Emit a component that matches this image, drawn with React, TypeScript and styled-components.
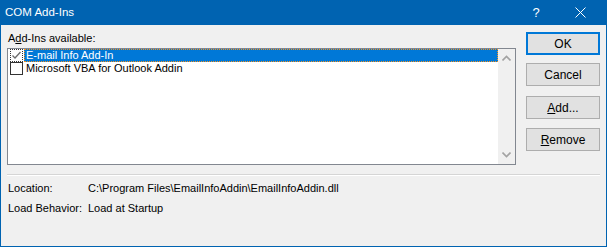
import React from 'react';
import styled, { createGlobalStyle } from 'styled-components';

const GlobalStyle = createGlobalStyle`
  html, body {
    margin: 0;
    padding: 0;
    background: #ffffff;
  }
  body {
    font-family: "Liberation Sans", Arial, sans-serif;
    font-size: 11px;
    color: #000000;
  }
`;

const Window = styled.div`
  width: 607px;
  height: 247px;
  box-sizing: border-box;
  background: #0063b1;
  padding: 0 1px 1px 1px;
  display: flex;
  flex-direction: column;
`;

const TitleBar = styled.div`
  height: 25px;
  display: flex;
  align-items: center;
  color: #ffffff;
  padding-left: 4px;
  padding-right: 4px;
`;

const Title = styled.div`
  flex: 1;
  font-size: 11.5px;
  line-height: 25px;
`;

const CaptionButton = styled.div`
  width: 44px;
  height: 25px;
  display: flex;
  align-items: center;
  justify-content: center;
  font-size: 13px;
`;

const Body = styled.div`
  flex: 1;
  background: #f0f0f0;
  padding: 0 6px 0 6px;
  display: flex;
  flex-direction: column;
`;

const MainRow = styled.div`
  display: flex;
  gap: 10px;
`;

const LeftColumn = styled.div`
  width: 509px;
  display: flex;
  flex-direction: column;
`;

const Label = styled.div`
  height: 23px;
  line-height: 15px;
  padding-top: 6px;
  box-sizing: border-box;
  padding-left: 1px;
`;

const ListBox = styled.div`
  height: 117px;
  box-sizing: border-box;
  border: 1px solid #828790;
  background: #ffffff;
  display: flex;
`;

const Items = styled.div`
  flex: 1;
  display: flex;
  flex-direction: column;
`;

const Item = styled.div`
  height: 13px;
  display: flex;
  align-items: center;
  box-sizing: border-box;
  padding-left: 2px;
`;

const CheckBox = styled.div<{ $focused?: boolean }>`
  width: 13px;
  height: 13px;
  box-sizing: border-box;
  border: 1px ${p => (p.$focused ? 'dotted' : 'solid')} #333333;
  background: #ffffff;
  display: flex;
  align-items: center;
  justify-content: center;
  margin-right: 1px;
`;

const ItemText = styled.div<{ $selected?: boolean }>`
  flex: 1;
  height: 13px;
  box-sizing: border-box;
  line-height: 11px;
  padding-left: 1px;
  white-space: nowrap;
  background: ${p => (p.$selected ? '#0078d7' : 'transparent')};
  color: ${p => (p.$selected ? '#ffffff' : '#000000')};
  border: 1px dotted ${p => (p.$selected ? '#f7931e' : 'transparent')};
`;

const ScrollBar = styled.div`
  width: 17px;
  background: #f0f0f0;
  display: flex;
  flex-direction: column;
  justify-content: space-between;
  align-items: center;
  padding: 6px 0;
  box-sizing: border-box;
`;

const ButtonColumn = styled.div`
  width: 74px;
  display: flex;
  flex-direction: column;
  padding-top: 7px;
`;

const Button = styled.div<{ $default?: boolean; $gap?: number }>`
  height: 23px;
  box-sizing: border-box;
  margin-bottom: ${p => p.$gap ?? 8}px;
  background: #e1e1e1;
  border: ${p => (p.$default ? '2px solid #0078d7' : '1px solid #adadad')};
  display: flex;
  align-items: center;
  justify-content: center;
  font-size: 12px;
`;

const Separator = styled.div`
  margin-top: 9px;
  height: 0;
  border-top: 1px solid #d5d5d5;
  border-bottom: 1px solid #ffffff;
`;

const InfoRow = styled.div<{ $first?: boolean }>`
  display: flex;
  height: 20px;
  align-items: center;
  padding-left: 1px;
  margin-top: ${p => (p.$first ? 2 : 0)}px;
  white-space: nowrap;
`;

const InfoLabel = styled.div`
  width: 80px;
`;

const Chevron = ({ up }: { up?: boolean }) => (
  <svg width="9" height="6" viewBox="0 0 9 6">
    <path
      d={up ? 'M0.5 5.5 L4.5 1.5 L8.5 5.5' : 'M0.5 0.5 L4.5 4.5 L8.5 0.5'}
      fill="none"
      stroke="#a3a3a3"
      strokeWidth="1.6"
    />
  </svg>
);

const CheckMark = () => (
  <svg width="11" height="11" viewBox="0 0 11 11">
    <path d="M1.5 5.5 L4 8 L9.5 2" fill="none" stroke="#6d6d6d" strokeWidth="1.3" />
  </svg>
);

const CloseIcon = () => (
  <svg width="11" height="11" viewBox="0 0 11 11">
    <path d="M0.5 0.5 L10.5 10.5 M10.5 0.5 L0.5 10.5" stroke="#ffffff" strokeWidth="1" />
  </svg>
);

const addIns = [
  { name: 'E-mail Info Add-In', checked: true, selected: true },
  { name: 'Microsoft VBA for Outlook Addin', checked: false, selected: false },
];

export default function App() {
  return (
    <>
      <GlobalStyle />
      <Window>
        <TitleBar>
          <Title>COM Add-Ins</Title>
          <CaptionButton>?</CaptionButton>
          <CaptionButton>
            <CloseIcon />
          </CaptionButton>
        </TitleBar>
        <Body>
          <MainRow>
            <LeftColumn>
              <Label>
                A<u>d</u>d-Ins available:
              </Label>
              <ListBox>
                <Items>
                  {addIns.map(a => (
                    <Item key={a.name}>
                      <CheckBox $focused={a.selected}>{a.checked && <CheckMark />}</CheckBox>
                      <ItemText $selected={a.selected}>{a.name}</ItemText>
                    </Item>
                  ))}
                </Items>
                <ScrollBar>
                  <Chevron up />
                  <Chevron />
                </ScrollBar>
              </ListBox>
            </LeftColumn>
            <ButtonColumn>
              <Button $default>OK</Button>
              <Button $gap={10}>Cancel</Button>
              <Button $gap={9}>
                <u>A</u>dd...
              </Button>
              <Button>
                <u>R</u>emove
              </Button>
            </ButtonColumn>
          </MainRow>
          <Separator />
          <InfoRow $first>
            <InfoLabel>Location:</InfoLabel>
            <div>C:\Program Files\EmailInfoAddin\EmailInfoAddin.dll</div>
          </InfoRow>
          <InfoRow>
            <InfoLabel>Load Behavior:</InfoLabel>
            <div>Load at Startup</div>
          </InfoRow>
        </Body>
      </Window>
    </>
  );
}
